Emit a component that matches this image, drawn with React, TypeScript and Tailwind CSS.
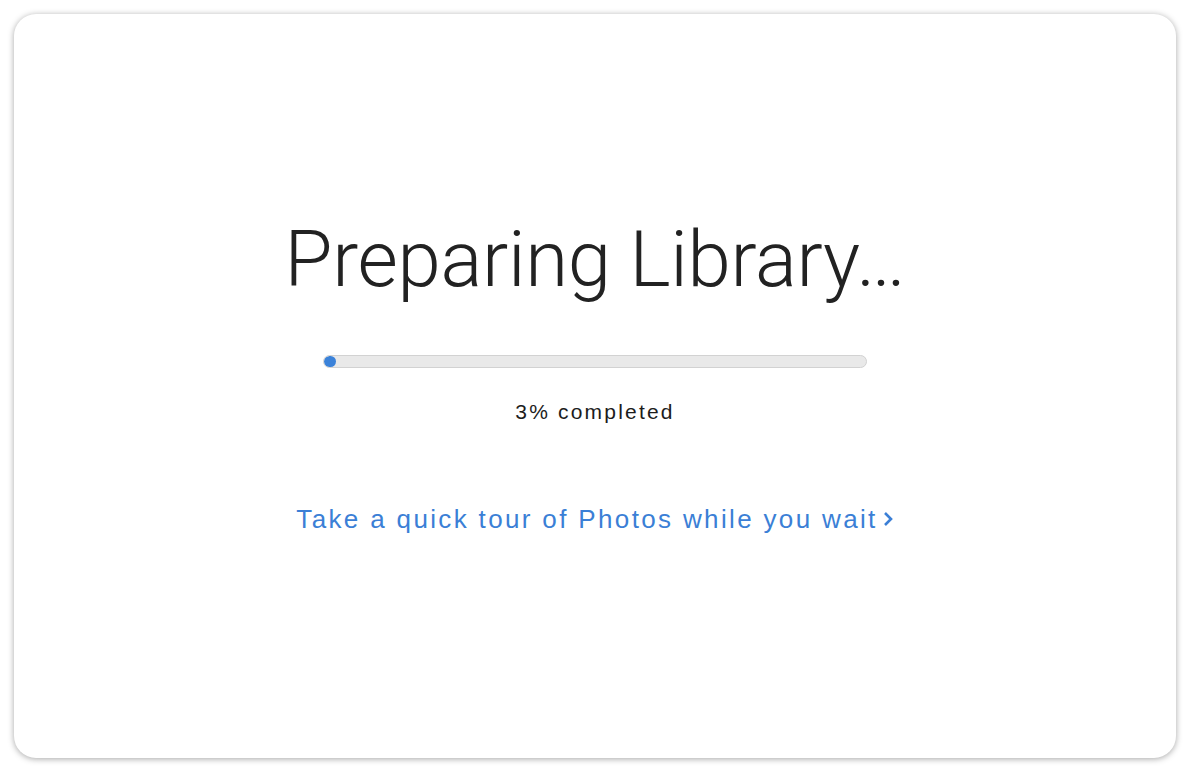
export default function App() {
  return (
    <main className="w-[1190px] h-[773px] bg-white p-[14px] font-['Liberation_Sans',sans-serif]">
      <div className="h-[744px] w-[1162px] rounded-[22px] bg-white shadow-[0_1px_6px_rgba(0,0,0,0.35)] flex flex-col items-center">
        <h1 className="mt-[196px] text-[78px] leading-[100px] font-light font-['Roboto',sans-serif] text-[#222] tracking-[-0.3px]">
          Preparing Library…
        </h1>

        <div className="mt-[45px] w-[544px] h-[13px] rounded-full bg-[#e9e9e9] border border-[#d2d2d2] flex items-center overflow-hidden">
          <div className="h-[11px] w-[12px] rounded-full bg-[#3b82d9]" />
        </div>

        <p className="mt-[32px] text-[21px] leading-[24px] text-[#1c1c1c] tracking-[2.2px]">3% completed</p>

        <a className="mt-[80px] text-[26px] leading-[30px] text-[#3b7fd6] tracking-[2.35px] flex items-center gap-1">
          Take a quick tour of Photos while you wait
          <svg width="12" height="18" viewBox="0 0 12 18" fill="none">
            <path d="M3 3l6 6-6 6" stroke="#3b7fd6" strokeWidth="2.6" />
          </svg>
        </a>
      </div>
    </main>
  );
}
